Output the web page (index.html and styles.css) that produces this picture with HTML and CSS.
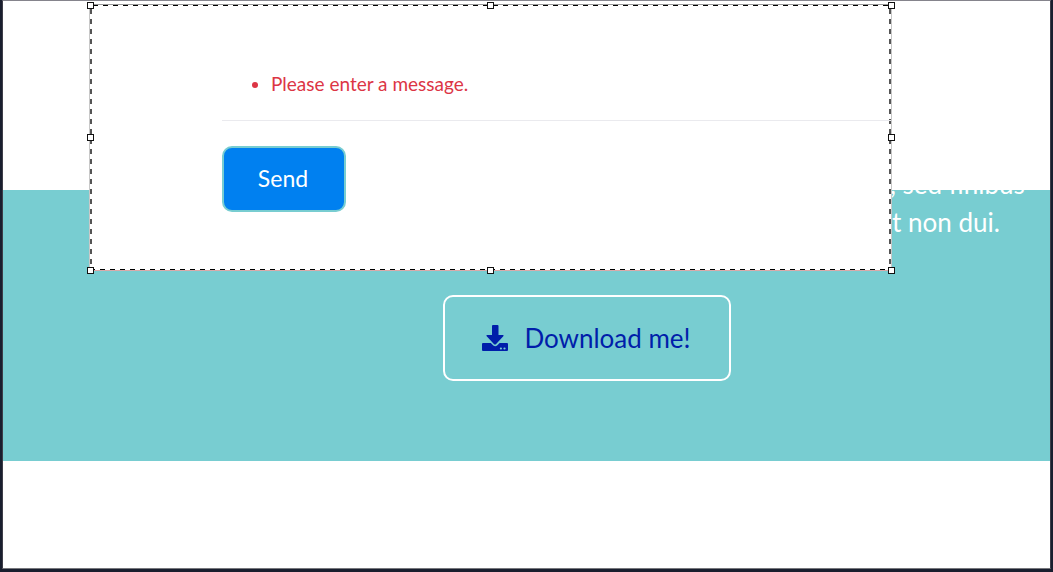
FILE: index.html
```
<!DOCTYPE html>
<html lang="en">
<head>
<meta charset="utf-8">
<title>Download</title>
<link rel="stylesheet" href="styles.css">
</head>
<body>
<main class="page">
  <section class="download">
    <p class="copy"><span class="line">, sed finibus</span> <span class="line last">t non dui.</span></p>
    <a class="download-link" href="#download">
      <svg class="icon" viewBox="0 0 26 26" aria-hidden="true">
        <path fill="currentColor" d="M11 0h4.500q1 0 1 1v9h4.500q1.200 0.300 0.300 1.300l-7.400 7.900q-.9.800-1.800 0L4.700 11.300q-.9-1 .3-1.300h5V1q0-1 1-1z"/>
        <path fill="currentColor" d="M1 18h7.800l2.500 2.500q1.900 1.500 3.800 0l2.500-2.500H25q1 0 1 1v6q0 1-1 1H1q-1 0-1-1v-6q0-1 1-1z"/>
        <circle class="light" cx="18.900" cy="23.500" r="1.100"/>
        <circle class="light" cx="22.500" cy="23.500" r="1.100"/>
      </svg>
      <span>Download me!</span>
    </a>
  </section>
</main>
<form class="selection">
  <div class="messages">
    <ul class="errors"><li>Please enter a message.</li></ul>
  </div>
  <button class="send" type="button">Send</button>
  <i class="handle top left"></i><i class="handle top center"></i><i class="handle top right"></i>
  <i class="handle middle left"></i><i class="handle middle right"></i>
  <i class="handle bottom left"></i><i class="handle bottom center"></i><i class="handle bottom right"></i>
</form>
</body>
</html>
```
FILE: styles.css
```
* { box-sizing: border-box; }
body {
  margin: 0;
  min-height: 100vh;
  display: flex;
  position: relative;
  font-family: Lato, "Liberation Sans", sans-serif;
  background: #191e2e;
  padding: 0 2px 3px;
}
.page {
  flex: 1;
  background: #fff;
  border: 1px solid #85848c;
  border-color: #85848c #3d3d48 #77777c #3d3d48;
  padding-top: 189px;
}
.download {
  background: #78cdd1;
  display: flex;
  flex-direction: column;
  padding-bottom: 80px;
}
.copy {
  margin: -25px 0 54px;
  padding-left: 887px;
  color: #fff;
  font-size: 26px;
  line-height: 38px;
  white-space: nowrap;
}
.line { display: block; }
.last { padding-left: 2px; }
.download-link {
  align-self: center;
  margin-left: 121px;
  display: flex;
  align-items: center;
  gap: 16px;
  padding: 0 38px 0 37px;
  height: 86px;
  border: 2px solid #fff;
  border-radius: 10px;
  color: #001eaa;
  font-size: 26px;
  text-decoration: none;
}
.icon { width: 26px; height: 26px; }
.light { fill: #78cdd1; }
.selection {
  position: absolute;
  left: 89px;
  top: 4px;
  width: 803px;
  height: 267px;
  padding-left: 132px;
  border: 1px solid #c8c8c8;
  border-color: #999 #c8c8c8 #d9a9a9;
  background:
    repeating-linear-gradient(90deg, #000 0 5px, #fff 5px 10px) 3px 0 / 100% 1px no-repeat,
    repeating-linear-gradient(90deg, #000 0 5px, #fff 5px 10px) 0 100% / 100% 1px no-repeat,
    repeating-linear-gradient(#555 0 5px, #fff 5px 10px) 0 4px / 2px 100% no-repeat,
    repeating-linear-gradient(#555 0 5px, #fff 5px 10px) 100% 4px / 2px 100% no-repeat,
    #fff;
}
.messages {
  height: 116px;
  padding-top: 66px;
  border-bottom: 1px solid #eaeaee;
}
.errors {
  margin: 0;
  padding-left: 49px;
  color: #dc3545;
  font-size: 19px;
  line-height: 26px;
}
.send {
  display: block;
  margin-top: 25px;
  width: 124px;
  height: 66px;
  padding: 0 2px 3px 0;
  border: 2px solid #78cdd1;
  border-radius: 10px;
  background: #0080f0;
  color: #fff;
  font: 23px Lato, "Liberation Sans", sans-serif;
}
.handle {
  position: absolute;
  width: 7px;
  height: 7px;
  border: 1px solid #111;
  background: #fff;
}
.top { top: -3px; }
.middle { top: 129px; }
.bottom { bottom: -4px; }
.left { left: -3px; }
.center { left: 397px; }
.right { right: -4px; }
```
